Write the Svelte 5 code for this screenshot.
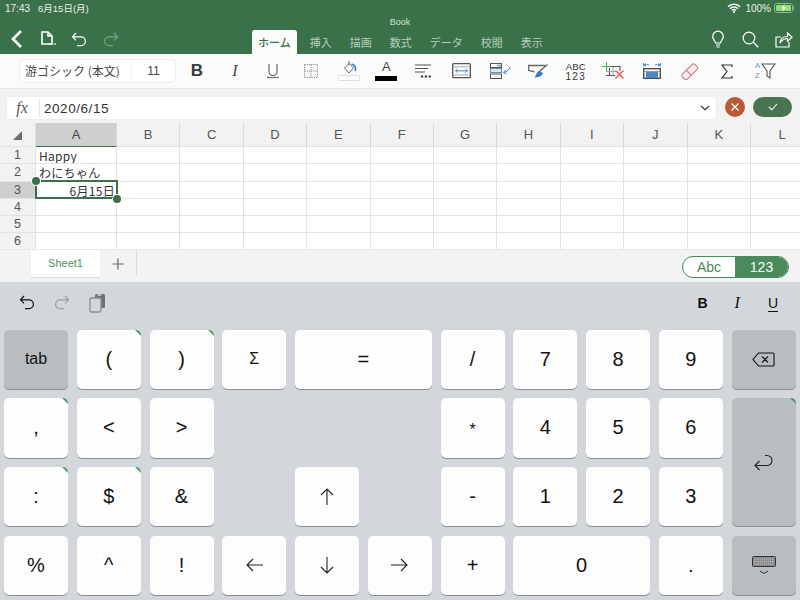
<script>
  const tabs = ['挿入', '描画', '数式', 'データ', '校閲', '表示'];
  const cols = ['A','B','C','D','E','F','G','H','I','J','K','L'];
  const rows = [
    { n: 1, a: 'Happy' },
    { n: 2, a: 'わにちゃん' },
    { n: 3, a: '6月15日', sel: true },
    { n: 4, a: '' },
    { n: 5, a: '' },
    { n: 6, a: '' }
  ];
  const keys = [
    { t: 'tab', dark: true, small: true }, { t: '(', mark: true }, { t: ')', mark: true }, { t: 'Σ', small: true }, { t: '=', span: 2 }, { t: '/' }, { t: '7' }, { t: '8' }, { t: '9' }, { icon: 'del', dark: true },
    { t: ',', mark: true }, { t: '<' }, { t: '>' }, { gap: 3 }, { t: '*', low: true }, { t: '4' }, { t: '5' }, { t: '6' }, { icon: 'ret', dark: true, tall: true, mark: true },
    { t: ':' , mark: true }, { t: '$', mark: true }, { t: '&' }, { gap: 1 }, { icon: 'up' }, { gap: 1 }, { t: '-' }, { t: '1' }, { t: '2' }, { t: '3' },
    { t: '%' }, { t: '^' }, { t: '!' }, { icon: 'left' }, { icon: 'down' }, { icon: 'right' }, { t: '+' }, { t: '0', span: 2 }, { t: '.' }, { icon: 'kbd', dark: true }
  ];
</script>

<div class="app">
  <header class="top">
    <div class="status">
      <span class="time">17:43</span><span class="date">6月15日(月)</span>
      <span class="fill"></span>
      <svg class="wifi" width="14" height="10" viewBox="0 0 14 10"><path d="M1 3.600a8.600 8.600 0 0 1 12 0M3 5.600a5.800 5.800 0 0 1 8 0M5 7.400a3 3 0 0 1 4 0" fill="none" stroke="#fff" stroke-width="1.500"/><circle cx="7" cy="9" r="1" fill="#fff"/></svg>
      <span class="pct">100%</span>
      <svg width="21" height="10" viewBox="0 0 21 10"><rect x=".5" y=".5" width="18" height="9" rx="2.200" fill="none" stroke="#8fb79a"/><rect x="2" y="2" width="15" height="6" rx="1" fill="#8ee06f"/><rect x="19.500" y="3.500" width="1" height="3" fill="#8fb79a"/><path d="M10.500 1 7.500 5.400h2.200L8.600 9l3.600-4.800H10z" fill="#fff"/></svg>
    </div>
    <div class="title">Book</div>
    <div class="nav">
      <div class="nav-left">
        <svg width="14" height="20" viewBox="0 0 14 20"><path d="M11 2 3 10l8 8" fill="none" stroke="#fff" stroke-width="2.600"/></svg>
        <svg class="ml1" width="18" height="16" viewBox="0 0 18 16"><path d="M2 1h6l4 4v8H2zM8 1v4h4" fill="none" stroke="#fff" stroke-width="1.600"/><path d="M9.500 13h1.300m1.200 0h1.300m1.200 0h1.300" stroke="#fff" stroke-width="1.600"/></svg>
        <svg class="ml2" width="16" height="15" viewBox="0 0 16 15"><path d="M5 1 1.500 4.800 5 8.400M2 4.800h8a4.400 4.400 0 0 1 0 8.800H6" fill="none" stroke="#fff" stroke-width="1.200"/></svg>
        <svg class="ml3" width="16" height="15" viewBox="0 0 16 15"><path d="M11 1l3.500 3.800L11 8.400M14 4.800H6a4.400 4.400 0 0 0 0 8.800h4" fill="none" stroke="#7ba487" stroke-width="1.200"/></svg>
      </div>
      <div class="tabs">
        <div class="tab active">ホーム</div>
        {#each tabs as t}<div class="tab">{t}</div>{/each}
      </div>
      <div class="nav-right">
        <svg width="16" height="18" viewBox="0 0 16 18"><path d="M5.500 13c0-2.200-2.800-3.500-2.800-6.500a5.300 5.300 0 0 1 10.600 0c0 3-2.800 4.300-2.800 6.500zM6 15h4M6.500 17h3" fill="none" stroke="#fff" stroke-width="1.200"/></svg>
        <svg width="17" height="17" viewBox="0 0 17 17"><circle cx="7" cy="7" r="5.800" fill="none" stroke="#fff" stroke-width="1.200"/><path d="m11 11 5.300 5.300" stroke="#fff" stroke-width="1.300"/></svg>
        <svg width="18" height="17" viewBox="0 0 18 17"><path d="M6 6H1v10h13v-5" fill="none" stroke="#fff" stroke-width="1.200"/><path d="M5 12c.5-4 3.500-6.500 7.500-6.500V2L17 6.200l-4.500 4V7.500C9.500 7.500 7 9 5 12z" fill="none" stroke="#fff" stroke-width="1.200"/></svg>
      </div>
    </div>
  </header>

  <div class="ribbon">
    <div class="fontbox"><span class="fname">游ゴシック (本文)</span><span class="fsize">11</span></div>
    <div class="tools">
      <div class="tool"><b class="tb">B</b></div>
      <div class="tool"><i class="ti">I</i></div>
      <div class="tool"><svg width="14" height="16" viewBox="0 0 14 16"><path d="M3 1v7.500a4 4 0 0 0 8 0V1" fill="none" stroke="#555" stroke-width="1.100"/><path d="M1 14.500h12" stroke="#777" stroke-width="1.300"/></svg></div>
      <div class="tool"><svg width="14" height="14" viewBox="0 0 14 14"><path d="M.5.500h13v13H.5zM7 .5v13M.5 7h13" fill="none" stroke="#8a8a8a" stroke-dasharray="1.200 1"/></svg></div>
      <div class="tool"><svg width="24" height="20" viewBox="0 0 24 20"><path d="M12 0v4M7.500 7 12 2.500 16.500 7 12 12z" fill="#fff" stroke="#666"/><path d="M14.500 3c3 .8 4.500 3.500 4 7" fill="none" stroke="#3f7fd0" stroke-width="1.700"/><rect x="1.500" y="14.500" width="21" height="5" rx="1" fill="#fff" stroke="#ddd"/></svg></div>
      <div class="tool col"><span class="ta">A</span><span class="abar"></span></div>
      <div class="tool"><svg width="20" height="14" viewBox="0 0 20 14"><path d="M1 1h16M1 4.500h13M1 8h10" stroke="#555" stroke-width="1.100"/><path d="M7 12.500h2.200m1.600 0H13m1.600 0h2.200" stroke="#333" stroke-width="1.800"/></svg></div>
      <div class="tool"><svg width="20" height="16" viewBox="0 0 20 16"><rect x=".7" y=".7" width="17.600" height="14" rx="1" fill="none" stroke="#555" stroke-width="1.300"/><path d="M1 3.800h17M1 12h17" stroke="#aaa"/><path d="M3.500 7.800h12M5.500 6l-2 1.800 2 1.800M13.500 6l2 1.800-2 1.800" fill="none" stroke="#3f86d8"/></svg></div>
      <div class="tool"><svg width="21" height="16" viewBox="0 0 21 16"><rect x=".5" y=".5" width="11" height="4" fill="none" stroke="#555"/><path d="M7 2.500h4" stroke="#8fb2dc" stroke-width="2"/><rect x=".5" y="5.500" width="11" height="4" fill="#dbe7f5" stroke="#6c8fb5"/><rect x=".5" y="11" width="11" height="4.500" fill="none" stroke="#555"/><path d="M20 4c-1 3-3 5-6.500 5.500M16 6.500l-2.500 3 3 1.500" fill="none" stroke="#3f86d8"/></svg></div>
      <div class="tool"><svg width="20" height="15" viewBox="0 0 20 15"><path d="M17 1.500H.7v5l6 1.300" fill="none" stroke="#666" stroke-width="1.300"/><path d="M19.500.5 12 7" stroke="#555" stroke-width="1.200"/><path d="M11.500 6.500 15 9.500c-1.500 3-5 4-8.500 4 1.500-1.500 1.500-5 5-7z" fill="#3b7cc6"/></svg></div>
      <div class="tool abc"><span>ABC</span><span class="n123">123</span></div>
      <div class="tool"><svg width="24" height="18" viewBox="0 0 24 18"><path d="M4.500 0v9M0 4.500h9" stroke="#55a868" stroke-width="1.200"/><path d="M9 4.500h9V9M7.500 6v8M4 13.500h9" fill="none" stroke="#555" stroke-width="1.100"/><path d="M4 9.500h10M11 5v8" stroke="#aaa"/><path d="m13.500 8.500 8 8m0-8-8 8" stroke="#d8584d" stroke-width="1.200"/></svg></div>
      <div class="tool"><svg width="18" height="16" viewBox="0 0 18 16"><path d="M.5 0v3.500M17.500 0v3.500M1 1.800h5M17 1.800h-5M3 .5 1 1.800 3 3M15 .5l2 1.300L15 3" fill="none" stroke="#4a8ad8"/><rect x=".7" y="5.700" width="16.600" height="9.600" fill="none" stroke="#444" stroke-width="1.300"/><rect x="3" y="9" width="12" height="6" fill="#4f86c8"/><path d="M1 8.500h16" stroke="#999"/></svg></div>
      <div class="tool"><svg width="18" height="18" viewBox="0 0 18 18"><path d="M1.500 12 11 2.500a2 2 0 0 1 3 0l2 2a2 2 0 0 1 0 3L6.500 17a2 2 0 0 1-3 0l-2-2a2 2 0 0 1 0-3zM5.500 8.500l5.500 5.500" fill="#f8eef0" stroke="#cf8a96" stroke-width="1.200"/></svg></div>
      <div class="tool"><svg width="12" height="15" viewBox="0 0 12 15"><path d="M11 3V1H1l5 6.500L1 14h10v-2" fill="none" stroke="#333" stroke-width="1.200"/></svg></div>
      <div class="tool az"><span class="azt"><span>A</span><span class="z">Z</span></span><svg width="15" height="16" viewBox="0 0 15 16"><path d="M1 1h13L9 8v7l-3-2V8z" fill="none" stroke="#555" stroke-width="1.100"/></svg></div>
    </div>
  </div>

  <div class="formula">
    <div class="input">
      <span class="fx">fx</span>
      <span class="val">2020/6/15</span>
      <svg class="chev" width="10" height="6" viewBox="0 0 10 6"><path d="m1 1 4 3.600L9 1" fill="none" stroke="#333" stroke-width="1.200"/></svg>
    </div>
    <div class="cancel"><svg width="10" height="10" viewBox="0 0 10 10"><path d="m1.500 1.500 7 7m0-7-7 7" stroke="#fff" stroke-width="1.300"/></svg></div>
    <div class="ok"><svg width="10" height="8" viewBox="0 0 10 8"><path d="m1 4 2.800 2.800L9 1" fill="none" stroke="#fff" stroke-width="1.100"/></svg></div>
  </div>

  <div class="sheet">
    <div class="gridwrap">
      <div class="cell corner"><span class="tri"></span></div>
      {#each cols as c, i}<div class="cell colh" class:on={i === 0}>{c}</div>{/each}
      {#each rows as r}
        <div class="cell rowh" class:on={r.sel}>{r.n}</div>
        {#each cols as c, i}
          <div class="cell body" class:right={r.sel}>{i === 0 ? r.a : ''}</div>
        {/each}
      {/each}
    </div>
    <div class="selbox"><span class="h h1"></span><span class="h h2"></span></div>
  </div>

  <div class="tabbar">
    <div class="sheettab">Sheet1</div>
    <div class="plus"><svg width="12" height="12" viewBox="0 0 12 12"><path d="M6 .5v11M.5 6h11" stroke="#666" stroke-width="1.200"/></svg></div>
    <span class="fill"></span>
    <div class="seg"><span class="abcseg">Abc</span><span class="numseg">123</span></div>
  </div>

  <div class="kb">
    <div class="kbtools">
      <svg width="16" height="15" viewBox="0 0 16 15"><path d="M5 1 1.500 4.800 5 8.400M2 4.800h8a4.400 4.400 0 0 1 0 8.800H6" fill="none" stroke="#111" stroke-width="1.200"/></svg>
      <svg width="16" height="15" viewBox="0 0 16 15"><path d="M11 1l3.500 3.800L11 8.400M14 4.800H6a4.400 4.400 0 0 0 0 8.800h4" fill="none" stroke="#9a9da2" stroke-width="1.200"/></svg>
      <svg width="17" height="20" viewBox="0 0 17 20"><rect x="6" y="1" width="10" height="14" rx="1.500" fill="#6e7074"/><path d="M8.500 2h4" stroke="#d3d6db" stroke-width="1.500"/><rect x="1" y="5" width="11" height="14" rx="1.500" fill="#d3d6db" stroke="#8a8c90" stroke-width="1.300"/></svg>
      <span class="fill"></span>
      <b class="kb-b">B</b>
      <i class="kb-i">I</i>
      <span class="kb-u">U</span>
    </div>
    <div class="keys">
      {#each keys as k}
        {#if k.gap}
          <div style="grid-column: span {k.gap}"></div>
        {:else}
          <div class="key" class:dark={k.dark} class:mark={k.mark} class:tall={k.tall} class:span2={k.span === 2} class:small={k.small} class:low={k.low}>
            {#if k.icon === 'del'}
              <svg width="23" height="15" viewBox="0 0 23 15"><path d="M6.500 1H21a1 1 0 0 1 1 1v11a1 1 0 0 1-1 1H6.500L1 7.500zM10 4.500l6 6m0-6-6 6" fill="none" stroke="#111" stroke-width="1.100"/></svg>
            {:else if k.icon === 'ret'}
              <svg width="19" height="17" viewBox="0 0 19 17"><path d="M5.500 7 1 11.500 5.500 16M1.500 11.500H13a4.800 4.800 0 0 0 0-10h-2" fill="none" stroke="#222" stroke-width="1.100"/></svg>
            {:else if k.icon === 'up'}
              <svg width="14" height="17" viewBox="0 0 14 17"><path d="M7 17V1M1 7l6-6 6 6" fill="none" stroke="#222" stroke-width="1.100"/></svg>
            {:else if k.icon === 'down'}
              <svg width="14" height="17" viewBox="0 0 14 17"><path d="M7 0v16M1 10l6 6 6-6" fill="none" stroke="#222" stroke-width="1.100"/></svg>
            {:else if k.icon === 'left'}
              <svg width="17" height="14" viewBox="0 0 17 14"><path d="M17 7H1M7 1 1 7l6 6" fill="none" stroke="#222" stroke-width="1.100"/></svg>
            {:else if k.icon === 'right'}
              <svg width="17" height="14" viewBox="0 0 17 14"><path d="M0 7h16M10 1l6 6-6 6" fill="none" stroke="#222" stroke-width="1.100"/></svg>
            {:else if k.icon === 'kbd'}
              <svg width="24" height="19" viewBox="0 0 24 19"><rect x=".5" y=".5" width="23" height="10" rx="1" fill="#8a8c8e" stroke="#333"/><path d="M2 3h20M2 5.500h20M2 8h20" stroke="#c4c6c8" stroke-dasharray="1 1"/><path d="m8 15 4 2.500 4-2.500" fill="none" stroke="#333"/></svg>
            {:else}
              {k.t}
            {/if}
          </div>
        {/if}
      {/each}
    </div>
  </div>
</div>

<style>
  :global(body) { margin: 0; }
  .app {
    width: 800px; height: 600px; overflow: hidden; display: flex; flex-direction: column;
    font-family: "Liberation Sans", "Noto Sans CJK JP", sans-serif; background: #f2f2f2;
  }
  .fill { flex: 1; }

  .top { height: 54px; background: #3b7149; color: #fff; display: flex; flex-direction: column; flex: none; }
  .status { height: 16px; display: flex; align-items: center; padding: 0 5px 0 5px; font-size: 9.500px; color: #e9f0ea; }
  .time { font-size: 10px; }
  .date { margin-left: 8px; }
  .wifi { margin-right: 4px; }
  .pct { margin-right: 3px; font-size: 10px; }
  .title { height: 14px; text-align: center; font-size: 9px; line-height: 12px; color: #cfe0d3; }
  .nav { height: 24px; display: flex; align-items: flex-end; }
  .nav-left { width: 252px; height: 26px; display: flex; align-items: center; padding-left: 10px; box-sizing: border-box; margin-bottom: 2px; flex: none; }
  .ml1 { margin-left: 16px; }
  .ml2 { margin-left: 13px; }
  .ml3 { margin-left: 16px; }
  .tabs { display: flex; gap: 6px; }
  .tab { height: 24px; padding: 0 6px; font-size: 11px; line-height: 25px; color: #b4cdbb; font-family: "Noto Sans CJK JP", sans-serif; }
  .tab.active { background: #fbfbfb; color: #3b7149; border-radius: 3px 3px 0 0; font-weight: 500; margin-right: 1px; }
  .nav-right { margin-left: auto; display: flex; gap: 16px; align-items: center; padding-right: 7px; height: 26px; margin-bottom: 2px; }

  .ribbon { height: 35px; background: #fbfbfb; border-bottom: 1px solid #e4e4e4; display: flex; align-items: center; padding-left: 19px; box-sizing: border-box; flex: none; }
  .fontbox { width: 157px; height: 24px; background: #fff; border: 1px solid #ededed; border-radius: 4px; box-sizing: border-box; display: flex; align-items: center; font-size: 12px; color: #444; font-family: "Noto Sans CJK JP", sans-serif; }
  .fname { width: 112px; padding-left: 5px; box-sizing: border-box; border-right: 1px solid #f2f2f2; white-space: nowrap; line-height: 22px; }
  .fsize { flex: 1; text-align: center; font-family: "Liberation Sans", sans-serif; }
  .tools { display: flex; margin-left: 2px; }
  .tool { width: 37.900px; height: 30px; display: flex; align-items: center; justify-content: center; flex: none; color: #444; }
  .tool.col { flex-direction: column; }
  .tb { font-size: 17px; font-weight: 700; color: #3d3d3d; }
  .ti { font-family: "Liberation Serif", serif; font-size: 16px; color: #444; }
  .ta { font-size: 13px; line-height: 12px; color: #444; }
  .abar { width: 22px; height: 4.500px; background: #000; margin-top: 3px; }
  .abc { flex-direction: column; font-size: 9.500px; line-height: 9px; letter-spacing: .2px; color: #333; }
  .n123 { letter-spacing: 1.400px; font-size: 10px; margin-top: 1px; }
  .az { gap: 1px; }
  .azt { display: flex; flex-direction: column; font-size: 8px; line-height: 10px; color: #6f9be0; }
  .z { color: #8a7fd0; }

  .formula { height: 34px; flex: none; display: flex; align-items: flex-start; padding: 7px 0 0 6px; box-sizing: border-box; background: #f2f2f2; }
  .input { width: 711px; height: 24px; background: #fff; border: 1px solid #ededed; border-radius: 4px; box-sizing: border-box; display: flex; align-items: center; }
  .fx { width: 33px; height: 18px; box-sizing: border-box; border-right: 1px solid #e4e4e4; text-align: center; font-family: "Liberation Serif", serif; font-style: italic; font-size: 16px; line-height: 17px; color: #555; flex: none; padding-right: 2px; }
  .val { margin-left: 4px; font-size: 13.500px; letter-spacing: .55px; color: #333; flex: 1; }
  .chev { margin-right: 6px; }
  .cancel { width: 20px; height: 20px; border-radius: 50%; background: #bd5836; margin: 1px 0 0 8px; display: flex; align-items: center; justify-content: center; }
  .ok { width: 39px; height: 20px; border-radius: 10px; background: #4a7451; margin: 1px 0 0 8px; display: flex; align-items: center; justify-content: center; }

  .sheet { position: relative; height: 127px; flex: none; overflow: hidden; background: #fff; border-bottom: 1px solid #e8e8e8; box-sizing: border-box; }
  .gridwrap { display: grid; grid-template-columns: 36px 81px repeat(11, 63.400px); grid-template-rows: 24px repeat(6, 17.300px); width: 860px; }
  .cell { box-sizing: border-box; border-right: 1px solid #e2e2e2; border-bottom: 1px solid #e2e2e2; overflow: hidden; white-space: nowrap; }
  .corner { background: #f2f2f2; position: relative; }
  .tri { position: absolute; right: 13px; bottom: 6px; border-style: solid; border-width: 0 0 9px 9px; border-color: transparent transparent #6e6e6e transparent; }
  .colh { background: #f2f2f2; text-align: center; font-size: 13px; line-height: 24px; color: #555; border-right-color: #dadada; }
  .colh.on { background: #cfcfcf; border-bottom: 1px solid #3b7149; color: #444; }
  .rowh { background: #f2f2f2; text-align: center; font-size: 12.500px; line-height: 17px; color: #555; }
  .rowh.on { background: #cfcfcf; }
  .body { font-size: 12px; line-height: 17px; color: #333; padding: 0 1px 0 3px; letter-spacing: .3px; font-family: "Noto Sans CJK JP", "Liberation Sans", sans-serif; }
  .right { text-align: right; }
  .selbox { position: absolute; left: 35px; top: 57px; width: 83px; height: 19px; box-sizing: border-box; border: 2px solid #3b7149; pointer-events: none; }
  .h { position: absolute; width: 8px; height: 8px; border-radius: 50%; background: #3b7149; box-shadow: 0 0 0 1px #fff; }
  .h1 { left: -5px; top: -5px; }
  .h2 { right: -5px; bottom: -6px; }

  .tabbar { height: 32px; flex: none; display: flex; align-items: flex-start; background: #f3f3f3; box-sizing: border-box; padding-right: 11px; }
  .sheettab { margin-left: 31px; width: 69px; height: 27px; background: #fff; color: #4a9160; font-size: 11px; line-height: 27px; text-align: center; box-shadow: 0 1px 1px #ddd; }
  .plus { width: 37px; height: 26px; border-right: 1px solid #dcdcdc; display: flex; align-items: center; justify-content: center; box-sizing: border-box; padding-top: 1px; }
  .seg { margin-top: 6px; width: 107px; height: 22px; border: 1px solid #4a8a5c; border-radius: 11px; overflow: hidden; display: flex; box-sizing: border-box; background: #fff; font-size: 14px; line-height: 20px; text-align: center; }
  .abcseg { width: 52px; color: #4a8a5c; }
  .numseg { flex: 1; background: #4a8a5c; color: #fff; }

  .kb { flex: 1; background: #d3d6db; display: flex; flex-direction: column; padding: 0 4px; }
  .kbtools { height: 47.500px; box-sizing: border-box; flex: none; display: flex; align-items: center; padding: 0 18px 6px 15px; gap: 19px; }
  .kb-b { font-size: 14px; color: #111; }
  .kb-i { font-family: "Liberation Serif", serif; font-size: 16px; color: #111; margin-left: 8px; }
  .kb-u { font-size: 14px; color: #111; text-decoration: underline; text-underline-offset: 3px; margin-left: 9px; }
  .keys { display: grid; grid-template-columns: repeat(11, 64px); column-gap: 8.750px; row-gap: 9.300px; grid-template-rows: repeat(4, 59.400px); }
  .key { position: relative; background: #fdfdfd; border-radius: 5px; box-shadow: 0 1px 0 #8e8f92; display: flex; align-items: center; justify-content: center; font-size: 20px; color: #111; overflow: hidden; }
  .key.dark { background: #babdc0; }
  .key.small { font-size: 16px; }
  .key.low { font-size: 16px; padding-top: 4px; box-sizing: border-box; }
  .key.span2 { grid-column: span 2; }
  .key.tall { grid-row: span 2; }
  .key.mark::after { content: ""; position: absolute; right: 0; top: 0; border-style: solid; border-width: 0 6px 6px 0; border-color: transparent #4f9a68 transparent transparent; }
</style>
